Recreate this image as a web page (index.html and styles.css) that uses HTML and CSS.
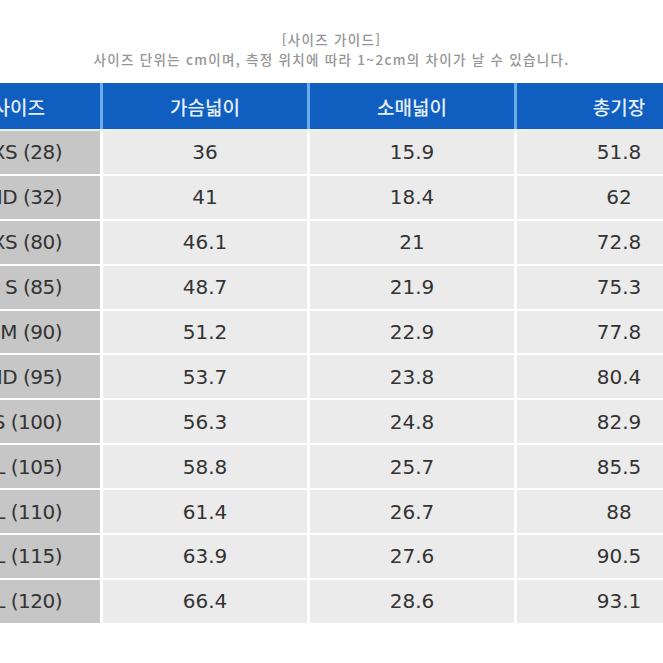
FILE: index.html
```html
<!DOCTYPE html>
<html lang="ko">
<head>
<meta charset="utf-8">
<title>사이즈 가이드</title>
<link rel="stylesheet" href="styles.css">
</head>
<body>
<div class="page">
  <div class="intro">
    <p class="intro-title">[사이즈 가이드]</p>
    <p class="intro-note">사이즈 단위는 cm이며, 측정 위치에 따라 1~2cm의 차이가 날 수 있습니다.</p>
  </div>
  <div class="table">
    <div class="head">
      <div class="hcell">사이즈</div>
      <div class="hcell">가슴넓이</div>
      <div class="hcell">소매넓이</div>
      <div class="hcell">총기장</div>
    </div>
    <div class="head-line"></div>
    <div class="body">
      <div class="cell label">XS (28)</div><div class="cell">36</div><div class="cell">15.9</div><div class="cell">51.8</div>
      <div class="cell label">MD (32)</div><div class="cell">41</div><div class="cell">18.4</div><div class="cell">62</div>
      <div class="cell label">XS (80)</div><div class="cell">46.1</div><div class="cell">21</div><div class="cell">72.8</div>
      <div class="cell label">S (85)</div><div class="cell">48.7</div><div class="cell">21.9</div><div class="cell">75.3</div>
      <div class="cell label">M (90)</div><div class="cell">51.2</div><div class="cell">22.9</div><div class="cell">77.8</div>
      <div class="cell label">MD (95)</div><div class="cell">53.7</div><div class="cell">23.8</div><div class="cell">80.4</div>
      <div class="cell label">LS (100)</div><div class="cell">56.3</div><div class="cell">24.8</div><div class="cell">82.9</div>
      <div class="cell label">L (105)</div><div class="cell">58.8</div><div class="cell">25.7</div><div class="cell">85.5</div>
      <div class="cell label">XL (110)</div><div class="cell">61.4</div><div class="cell">26.7</div><div class="cell">88</div>
      <div class="cell label">2XL (115)</div><div class="cell">63.9</div><div class="cell">27.6</div><div class="cell">90.5</div>
      <div class="cell label">3XL (120)</div><div class="cell">66.4</div><div class="cell">28.6</div><div class="cell">93.1</div>
    </div>
  </div>
</div>
</body>
</html>
```
FILE: styles.css
```css
* { box-sizing: border-box; }
html, body { margin: 0; padding: 0; background: #ffffff; }
.page {
  width: 663px;
  height: 663px;
  overflow: hidden;
  font-family: "Noto Sans CJK KR", "Noto Sans", sans-serif;
}
.intro {
  padding-top: 30px;
  text-align: center;
  color: #959595;
  font-size: 13.5px;
  font-weight: 500;
  line-height: 19.5px;
  letter-spacing: 1.3px;
}
.intro p { margin: 0; }
.table {
  margin-top: 14px;
  margin-left: -60px;
  width: 800px;
}
.head {
  display: grid;
  grid-template-columns: 160px 204px 204px 204px;
  column-gap: 3px;
  height: 46px;
  background: #6aacea;
}
.hcell {
  background: #0f5ec0;
  color: #e4eefb;
  font-size: 19px;
  font-weight: 500;
  display: flex;
  align-items: center;
  justify-content: center;
}
.hcell:first-child {
  justify-content: flex-end;
  padding-right: 55px;
}
.head-line {
  height: 2px;
  background: #e9f1fa;
}
.body {
  display: grid;
  grid-template-columns: 160px 204px 204px 204px;
  grid-auto-rows: 42.9px;
  column-gap: 3px;
  row-gap: 2px;
  background: #ffffff;
}
.cell {
  background: #ebebeb;
  color: #333333;
  font-family: "DejaVu Sans", "Noto Sans", sans-serif;
  font-size: 20px;
  display: flex;
  align-items: center;
  justify-content: center;
}
.cell.label {
  background: #c6c6c6;
  justify-content: flex-end;
  padding-right: 38px;
  letter-spacing: -0.5px;
}
```
